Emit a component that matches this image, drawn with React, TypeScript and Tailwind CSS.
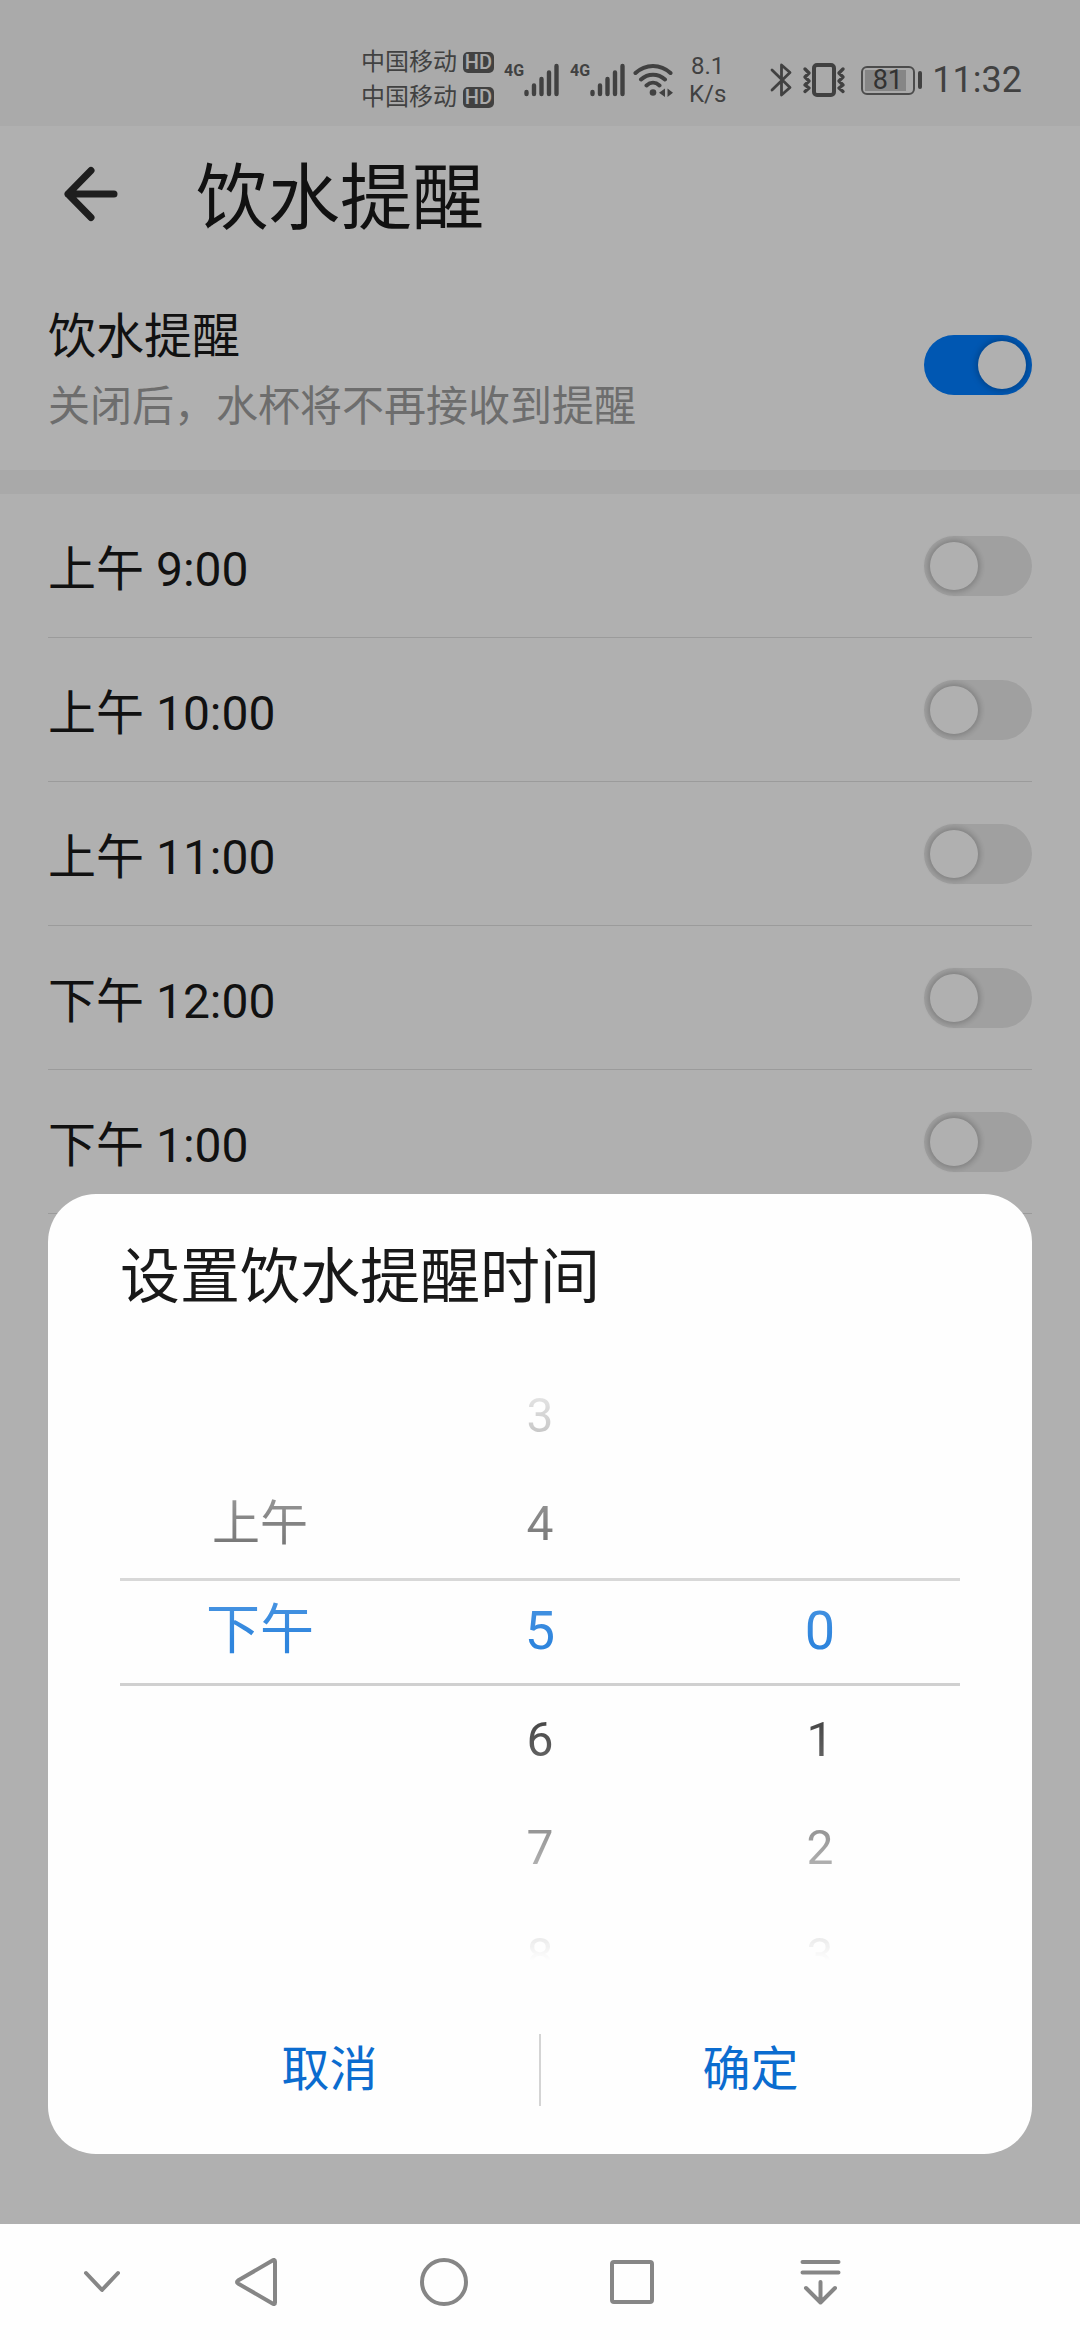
import React, { useState } from 'react';

const reminderTimes = ['上午 9:00', '上午 10:00', '上午 11:00', '下午 12:00', '下午 1:00'];

const Switch: React.FC<{ id: string; checked: boolean; onChange: () => void }> = ({ id, checked, onChange }) => (
  <input
    id={id}
    type="checkbox"
    role="switch"
    checked={checked}
    onChange={onChange}
    className="flex h-[60px] w-[108px] shrink-0 appearance-none items-center rounded-full bg-[#e6e6e6] px-[6px] before:h-12 before:w-12 before:rounded-full before:bg-[#fdfdfd] before:shadow-[0_0_6px_2px_rgba(0,0,0,0.22)] checked:justify-end checked:bg-[#007dff]"
  />
);

const Carrier = () => (
  <div className="flex h-[35px] items-center gap-[6px]">
    <span className="text-[24px] leading-[35px]">中国移动</span>
    <span className="flex h-[21px] w-[31px] items-center justify-center rounded-[5px] bg-[#5e5e5e] text-[20px] leading-[21px] font-medium text-[#f4f4f4]">
      HD
    </span>
  </div>
);

const Signal = () => (
  <div className="flex h-[34px] w-[54px] items-start justify-between">
    <span className="text-[16px] leading-[16px] font-bold">4G</span>
    <svg viewBox="0 0 35 34" className="h-[34px] w-[35px] shrink-0" stroke="currentColor" strokeWidth="4.4" strokeLinecap="round">
      <path d="M2.5 29v2M10 22.5V31M17.5 16v15M25 9.500V31M32.500 3V31" />
    </svg>
  </div>
);

const StatusBar = () => (
  <div className="flex h-[126px] items-center justify-end bg-[#f4f4f4] pt-[34px] pr-[58px] text-[#5e5e5e]">
    <div>
      <Carrier />
      <Carrier />
    </div>
    <div className="ml-[10px]">
      <Signal />
    </div>
    <div className="ml-3">
      <Signal />
    </div>
    <svg viewBox="0 0 40 34" className="ml-[9px] h-[34px] w-10" fill="none" stroke="currentColor" strokeWidth="4" strokeLinecap="round">
      <path d="M2.500 10C12.500 0.500 27.500 0.500 37.500 10M8 16.500C15 10 25 10 32 16.500M13.500 22.500C17.500 18.800 22.500 18.800 26.500 22.500" />
      <circle cx="20" cy="29.500" r="3.300" fill="currentColor" stroke="none" />
      <path d="M32 25.500v8.500l-6-4.200zM34.500 25.500v8.500l5.500-4.200z" fill="currentColor" stroke="none" />
    </svg>
    <div className="ml-4 text-center text-[24px] leading-7">
      <div>8.1</div>
      <div>K/s</div>
    </div>
    <svg viewBox="0 0 22 36" className="ml-[44px] h-9 w-[22px]" fill="none" stroke="currentColor" strokeWidth="2.800" strokeLinejoin="round" strokeLinecap="round">
      <path d="M2 8L20 25.500L11.500 33V3L20 10.500L2 28" />
    </svg>
    <svg viewBox="0 0 44 34" className="ml-[10px] h-[34px] w-[44px]" fill="none" stroke="currentColor" strokeLinejoin="round" strokeLinecap="round">
      <rect x="12" y="2" width="20" height="30" rx="3" strokeWidth="4" />
      <path d="M3 6l4 4-4 4 4 4-4 4 4 3-4 3.500M41 6l-4 4 4 4-4 4 4 4-4 3 4 3.500" strokeWidth="3.400" />
    </svg>
    <div className="ml-[15px] flex items-center gap-[3px]">
      <div className="h-[29px] w-[54px] rounded-[6px] border-2 border-[#6e6e6e] p-[2px]">
        <div className="flex h-full w-[41px] items-center justify-center bg-[#c0c0c0] pl-1 text-[27px] leading-none text-[#484848]">81</div>
      </div>
      <div className="h-[18px] w-1 rounded-[2px] bg-[#5e5e5e]" />
    </div>
    <div className="ml-[10px] text-[36px] leading-[42px]">11:32</div>
  </div>
);

type WheelProps = {
  label: string;
  items: string[];
  selected: string;
  offset: string;
  onSelect: (item: string) => void;
};

const Wheel: React.FC<WheelProps> = ({ label, items, selected, offset, onSelect }) => (
  <ul
    role="listbox"
    aria-label={label}
    className={`h-[600px] overflow-hidden text-center text-[48px] text-[#1a1a1a] [mask-image:linear-gradient(to_bottom,rgba(0,0,0,0)_0px,rgba(0,0,0,0.18)_54px,rgba(0,0,0,0.54)_162px,rgba(0,0,0,0.82)_280px,rgba(0,0,0,0.8)_360px,rgba(0,0,0,0.4)_486px,rgba(0,0,0,0.07)_580px,rgba(0,0,0,0)_598px)] ${offset}`}
  >
    {items.map((item) => (
      <li
        key={item}
        role="option"
        aria-selected={item === selected}
        onClick={() => onSelect(item)}
        className={
          item === selected
            ? 'h-[108px] border-y-[3px] border-[#c5c5c5] text-[54px] leading-[100px] text-[#006ad6]'
            : 'h-[108px] leading-[108px]'
        }
      >
        {item}
      </li>
    ))}
  </ul>
);

const TimeDialog = () => {
  const [period, setPeriod] = useState('下午');
  const [hour, setHour] = useState('5');
  const [minute, setMinute] = useState('0');

  return (
    <div role="dialog" aria-labelledby="dialog-title" className="w-full rounded-[48px] bg-[#fefefe] px-[72px] pt-11 pb-12">
      <h2 id="dialog-title" className="text-[60px] leading-[80px] text-[#191919]">
        设置饮水提醒时间
      </h2>
      <div className="mt-11 grid grid-cols-3">
        <Wheel label="时段" items={['上午', '下午']} selected={period} offset="pt-[108px]" onSelect={setPeriod} />
        <Wheel label="小时" items={['3', '4', '5', '6', '7', '8']} selected={hour} offset="pt-0" onSelect={setHour} />
        <Wheel label="分钟" items={['0', '1', '2', '3']} selected={minute} offset="pt-[216px]" onSelect={setMinute} />
      </div>
      <div className="mt-[72px] flex h-[72px] text-[48px] leading-[72px] text-[#0b6ccf]">
        <button type="button" className="flex-1">取消</button>
        <div className="w-[2px] bg-[#d4d4d4]" />
        <button type="button" className="flex-1">确定</button>
      </div>
    </div>
  );
};

const NavBar = () => (
  <nav className="grid h-[116px] grid-cols-[42fr_120fr_188fr_188fr_188fr_188fr_166fr] items-center bg-[#fefefe] text-[#868686]">
    <span />
    <button type="button" aria-label="收起" className="flex justify-center">
      <svg viewBox="0 0 48 48" className="h-12 w-12" fill="none" stroke="currentColor" strokeWidth="4" strokeLinecap="round" strokeLinejoin="round">
        <path d="M8 15l16 17 16-17" />
      </svg>
    </button>
    <button type="button" aria-label="返回" className="flex justify-center">
      <svg viewBox="0 0 48 48" className="h-12 w-12" fill="none" stroke="currentColor" strokeWidth="4" strokeLinecap="round" strokeLinejoin="round">
        <path d="M43 3.500Q43 1 40.500 2.500L6 22.500Q4 24 6 25.500L40.500 45.500Q43 47 43 44.500Z" />
      </svg>
    </button>
    <button type="button" aria-label="主页" className="flex justify-center">
      <svg viewBox="0 0 48 48" className="h-12 w-12" fill="none" stroke="currentColor" strokeWidth="4">
        <circle cx="24" cy="24" r="22" />
      </svg>
    </button>
    <button type="button" aria-label="最近任务" className="flex justify-center">
      <svg viewBox="0 0 48 48" className="h-12 w-12" fill="none" stroke="currentColor" strokeWidth="4">
        <rect x="4" y="4" width="40" height="40" rx="2" />
      </svg>
    </button>
    <button type="button" aria-label="通知栏" className="flex justify-center">
      <svg viewBox="0 0 48 48" className="h-12 w-12" fill="none" stroke="currentColor" strokeWidth="4" strokeLinecap="round" strokeLinejoin="round">
        <path d="M6.500 4h36M6.500 14.500h36M24.500 24v20M10 30l14.500 14.500L39 30" />
      </svg>
    </button>
  </nav>
);

const App: React.FC = () => {
  const [enabled, setEnabled] = useState(true);
  const [active, setActive] = useState<string[]>([]);

  const toggleTime = (time: string) => {
    setActive(active.includes(time) ? active.filter((t) => t !== time) : [...active, time]);
  };

  return (
    <div className="flex min-h-screen flex-col font-[Roboto,'Noto_Sans_CJK_SC',sans-serif]">
      <main className="relative flex-1 bg-[#fdfdfd] text-[#191919]">
        <StatusBar />
        <header className="flex h-[134px] items-center gap-[76px] pl-[62px]">
          <button type="button" aria-label="返回">
            <svg viewBox="0 0 58 58" className="h-[58px] w-[58px]" fill="none" stroke="#2c2c2c" strokeWidth="7" strokeLinecap="round" strokeLinejoin="round">
              <path d="M52 30H6M29 6.500L6 30l23 23.500" />
            </svg>
          </button>
          <h1 className="pt-3 text-[72px] leading-[96px]">饮水提醒</h1>
        </header>
        <section className="flex h-[210px] items-center justify-between px-12">
          <label htmlFor="reminder" className="pt-3">
            <span className="block text-[48px] leading-[72px]">饮水提醒</span>
            <span className="block text-[42px] leading-[68px] text-[#9c9c9c]">关闭后，水杯将不再接收到提醒</span>
          </label>
          <Switch id="reminder" checked={enabled} onChange={() => setEnabled(!enabled)} />
        </section>
        <div className="h-6 bg-[#f3f3f3]" />
        <ul className="px-12">
          {reminderTimes.map((time) => (
            <li key={time} className="flex h-36 items-center justify-between border-b border-[#dfdfdf]">
              <label htmlFor={time} className="pt-2 text-[48px] leading-[72px]">{time}</label>
              <Switch id={time} checked={active.includes(time)} onChange={() => toggleTime(time)} />
            </li>
          ))}
        </ul>
        <div className="absolute inset-0 flex items-end bg-black/30 px-12 pb-[70px]">
          <TimeDialog />
        </div>
      </main>
      <NavBar />
    </div>
  );
};

export default App;
